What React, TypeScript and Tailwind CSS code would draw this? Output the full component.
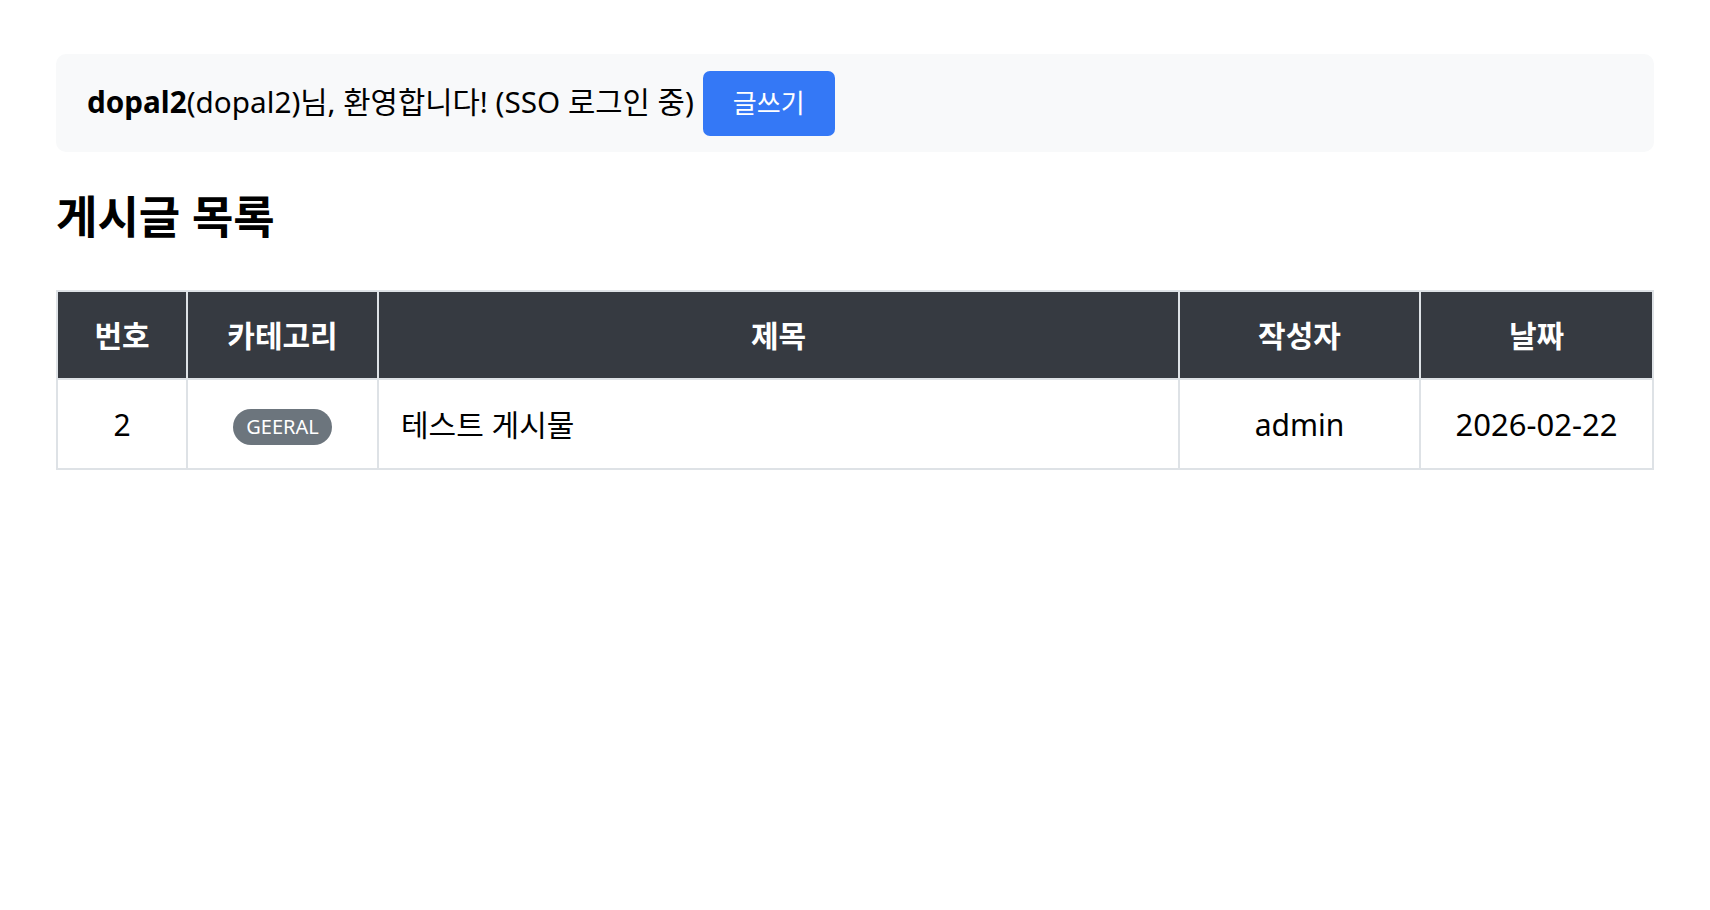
import React from "react";

const font = { fontFamily: '"Noto Sans", "Noto Sans CJK KR", sans-serif' };

export default function App() {
  return (
    <div
      className="min-h-screen bg-white text-black px-[56px] pt-[54px]"
      style={font}
    >
      <div className="flex items-center gap-[9px] rounded-[10px] bg-[#f8f9fa] h-[98px] pl-[31px] pr-4 text-[29.7px]">
        <span className="-mt-[2px]">
          <span className="font-bold">dopal2</span>(dopal2)님, 환영합니다! (SSO 로그인 중)
        </span>
        <button className="h-[65px] px-[30px] rounded-[7px] bg-[#3478f6] text-white text-[26px]">
          글쓰기
        </button>
      </div>

      <h2 className="mt-[38px] text-[45px] font-bold leading-[1.2]">게시글 목록</h2>

      <table className="mt-[46px] w-full border-collapse text-[30px]">
        <thead>
          <tr className="bg-[#363a41] text-white h-[88px]">
            <th className="w-[130px] border-2 border-[#dee2e6] font-bold">번호</th>
            <th className="w-[191px] border-2 border-[#dee2e6] font-bold">카테고리</th>
            <th className="w-[801px] border-2 border-[#dee2e6] font-bold">제목</th>
            <th className="w-[241px] border-2 border-[#dee2e6] font-bold">작성자</th>
            <th className="border-2 border-[#dee2e6] font-bold">날짜</th>
          </tr>
        </thead>
        <tbody>
          <tr className="h-[90px]">
            <td className="border-2 border-[#dee2e6] text-center">2</td>
            <td className="border-2 border-[#dee2e6] text-center">
              <span className="inline-flex items-center justify-center h-[36px] px-[13px] rounded-full bg-[#6c757d] text-white text-[20px] align-middle">
                GEERAL
              </span>
            </td>
            <td className="border-2 border-[#dee2e6] pl-[22px]">테스트 게시물</td>
            <td className="border-2 border-[#dee2e6] text-center">admin</td>
            <td className="border-2 border-[#dee2e6] text-center text-[31px]">2026-02-22</td>
          </tr>
        </tbody>
      </table>
    </div>
  );
}
